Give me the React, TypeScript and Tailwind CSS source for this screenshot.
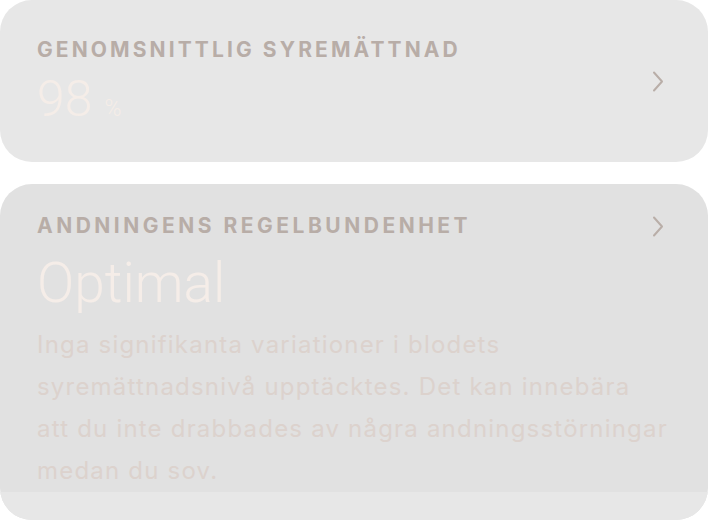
import React from "react";

function Chevron() {
  return (
    <svg width="12" height="21" viewBox="0 0 12 21" fill="none" className="shrink-0">
      <path d="M2 1.5 L10 10.5 L2 19.5" stroke="#b9aea8" strokeWidth="2" strokeLinecap="round" strokeLinejoin="round" />
    </svg>
  );
}

export default function App() {
  return (
    <div className="w-[708px] h-[522px] bg-white flex flex-col gap-[22px]" style={{ fontFamily: "Roboto, 'Liberation Sans', sans-serif" }}>
      <div className="h-[162px] shrink-0 rounded-[32px] bg-[#e7e7e7] flex items-center pl-[37px] pr-[44px]">
        <div className="flex-1 flex flex-col self-start pt-[36px]">
          <div className="font-['Inter',sans-serif] text-[21px] leading-[28px] font-bold tracking-[3.1px] text-[#b8ada7] whitespace-nowrap">GENOMSNITTLIG SYREMÄTTNAD</div>
          <div className="flex items-baseline gap-[12px] text-[#f5ede8] mt-[10px]">
            <span className="text-[50px] leading-[50px] font-light">98</span>
            <span className="text-[23px] leading-[22px] font-light">%</span>
          </div>
        </div>
        <Chevron />
      </div>
      <div className="h-[336px] shrink-0 rounded-[32px] bg-[#e1e1e1] flex flex-col overflow-hidden">
        <div className="flex-1 pl-[37px] pr-[44px] pt-[28px]">
          <div className="flex items-center justify-between">
            <div className="font-['Inter',sans-serif] text-[21px] leading-[28px] font-bold tracking-[3.5px] text-[#b8ada7] whitespace-nowrap">ANDNINGENS REGELBUNDENHET</div>
            <Chevron />
          </div>
          <div className="text-[55px] leading-[55px] font-light text-[#f5ede8] mt-[16px]">Optimal</div>
          <div className="font-['Inter',sans-serif] text-[24px] leading-[42px] font-normal tracking-[1.2px] text-[#dcd2cd] mt-[13px] whitespace-nowrap">
            Inga signifikanta variationer i blodets
            <br />
            syremättnadsnivå upptäcktes. Det kan innebära
            <br />
            att du inte drabbades av några andningsstörningar
            <br />
            medan du sov.
          </div>
        </div>
        <div className="h-[28px] shrink-0 bg-[#e7e7e7]" />
      </div>
    </div>
  );
}
